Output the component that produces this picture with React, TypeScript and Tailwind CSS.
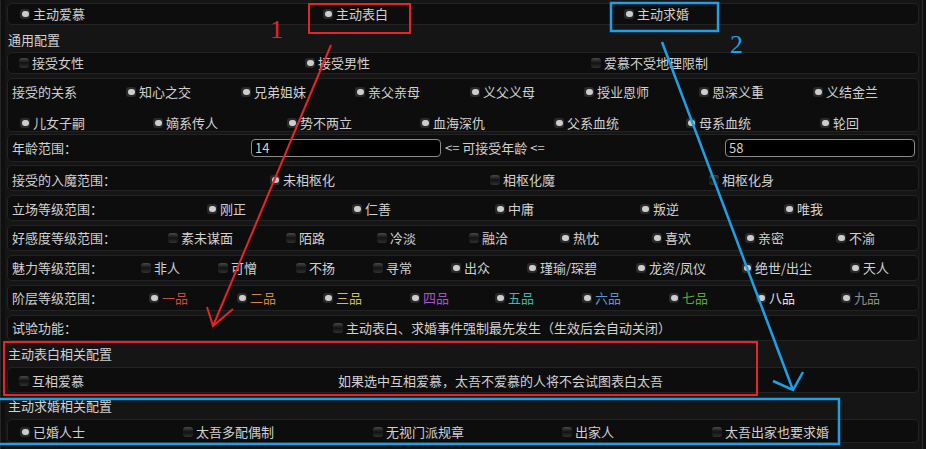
import React from "react";

type Item = { t: string; on?: boolean; c?: string };

const Box = ({ on }: { on?: boolean }) =>
  on ? (
    <span className="flex h-[10px] w-[10px] shrink-0 items-center justify-center rounded-[3px] bg-[#2a2a2a]">
      <span className="h-[6px] w-[7px] rounded-[3px] bg-[#cdcdcd]" />
    </span>
  ) : (
    <span className="h-[10px] w-[10px] shrink-0 rounded-[3px] bg-linear-to-b from-[#4a4a4a] via-[#121212] to-[#313131]" />
  );

const Check = ({ t, on, c }: Item) => (
  <div className="flex items-center gap-[3px] whitespace-nowrap">
    <Box on={on} />
    <span className={c ?? "text-[#d0d0d0]"}>{t}</span>
  </div>
);

const Panel = ({ className, children }: { className: string; children: React.ReactNode }) => (
  <div className={"rounded-[5px] border border-[#232323] bg-[#0d0d0d] " + className}>{children}</div>
);

const Label = ({ t }: { t: string }) => <span className="whitespace-nowrap text-[#d0d0d0]">{t}</span>;

const rel1: Item[] = [
  { t: "知心之交", on: true },
  { t: "兄弟姐妹", on: true },
  { t: "亲父亲母", on: true },
  { t: "义父义母", on: true },
  { t: "授业恩师", on: true },
  { t: "恩深义重", on: true },
  { t: "义结金兰", on: true },
];
const rel2: Item[] = [
  { t: "儿女子嗣", on: true },
  { t: "嫡系传人", on: true },
  { t: "势不两立", on: true },
  { t: "血海深仇", on: true },
  { t: "父系血统", on: true },
  { t: "母系血统", on: true },
  { t: "轮回", on: true },
];
const stance: Item[] = ["刚正", "仁善", "中庸", "叛逆", "唯我"].map((t) => ({ t, on: true }));
const favor: Item[] = [
  { t: "素未谋面" },
  { t: "陌路" },
  { t: "冷淡" },
  { t: "融洽" },
  { t: "热忱", on: true },
  { t: "喜欢", on: true },
  { t: "亲密", on: true },
  { t: "不渝", on: true },
];
const charm: Item[] = [
  { t: "非人" },
  { t: "可憎" },
  { t: "不扬" },
  { t: "寻常" },
  { t: "出众", on: true },
  { t: "瑾瑜/琛碧", on: true },
  { t: "龙资/凤仪", on: true },
  { t: "绝世/出尘", on: true },
  { t: "天人", on: true },
];
const ranks: Item[] = [
  { t: "一品", on: true, c: "text-[#cc4a3e]" },
  { t: "二品", on: true, c: "text-[#d8863c]" },
  { t: "三品", on: true, c: "text-[#d6bb5c]" },
  { t: "四品", on: true, c: "text-[#a852d2]" },
  { t: "五品", on: true, c: "text-[#46b4b2]" },
  { t: "六品", on: true, c: "text-[#5898d8]" },
  { t: "七品", on: true, c: "text-[#58aa3c]" },
  { t: "八品", on: true, c: "text-[#e2e2e2]" },
  { t: "九品", on: true, c: "text-[#8e8e8e]" },
];
const marry: Item[] = [
  { t: "已婚人士", on: true },
  { t: "太吾多配偶制" },
  { t: "无视门派规章" },
  { t: "出家人" },
  { t: "太吾出家也要求婚" },
];

export default function App() {
  return (
    <div className="relative flex h-[449px] w-[926px] overflow-hidden bg-[#151515] font-['Noto_Sans_CJK_SC',sans-serif] text-[13px] leading-[18px] text-[#d0d0d0]">
      <div className="w-[5px] shrink-0 border-l border-[#262626] bg-[#0f0f0f]" />
      <div className="flex flex-1 flex-col pl-[2px] pr-[3px]">
        <Panel className="mt-[3px] grid h-[22px] grid-cols-[303px_301px_1fr] items-center pl-[12px]">
          <Check t="主动爱慕" on />
          <Check t="主动表白" on />
          <Check t="主动求婚" on />
        </Panel>
        <div className="flex h-[27px] items-center pl-[1px] pt-[2px]">通用配置</div>
        <Panel className="grid h-[22px] grid-cols-[286px_286px_1fr] items-center pl-[11px]">
          <Check t="接受女性" />
          <Check t="接受男性" on />
          <Check t="爱慕不受地理限制" />
        </Panel>
        <Panel className="mt-[4px] flex h-[54px] flex-col">
          <div className="grid h-[26px] grid-cols-[114px_115px_114px_115px_114px_115px_114px_1fr] items-center pl-[4px]">
            <Label t="接受的关系" />
            {rel1.map((i) => (
              <Check key={i.t} {...i} />
            ))}
          </div>
          <div className="grid h-[26px] grid-cols-[133px_134px_133px_134px_132px_134px_1fr] items-center pl-[12px] pt-[9px]">
            {rel2.map((i) => (
              <Check key={i.t} {...i} />
            ))}
          </div>
        </Panel>
        <Panel className="mt-[2px] flex h-[28px] items-center pl-[4px]">
          <div className="w-[239px] shrink-0">
            <Label t="年龄范围：" />
          </div>
          <div className="flex h-[18px] w-[190px] shrink-0 items-center rounded-[4px] border border-[#8a8a8a] bg-black pl-[3px]">14</div>
          <div className="w-[284px] shrink-0 pl-[4px]">{"<= 可接受年龄 <="}</div>
          <div className="flex h-[18px] w-[190px] shrink-0 items-center rounded-[4px] border border-[#8a8a8a] bg-black pl-[3px]">58</div>
        </Panel>
        <Panel className="mt-[3px] grid h-[26px] grid-cols-[258px_220px_219px_1fr] items-center pl-[4px] pt-[3px]">
          <Label t="接受的入魔范围：" />
          <Check t="未相枢化" on />
          <Check t="相枢化魔" />
          <Check t="相枢化身" />
        </Panel>
        <Panel className="mt-[4px] grid h-[26px] grid-cols-[195px_145px_143px_145px_144px_1fr] items-center pl-[4px] pt-[1px]">
          <Label t="立场等级范围：" />
          {stance.map((i) => (
            <Check key={i.t} {...i} />
          ))}
        </Panel>
        <Panel className="mt-[4px] grid h-[26px] grid-cols-[156px_118px_91px_92px_91px_92px_93px_91px_1fr] items-center pl-[4px]">
          <Label t="好感度等级范围：" />
          {favor.map((i) => (
            <Check key={i.t} {...i} />
          ))}
        </Panel>
        <Panel className="mt-[4px] grid h-[26px] grid-cols-[129px_77px_78px_77px_78px_76px_109px_106px_108px_1fr] items-center pl-[4px]">
          <Label t="魅力等级范围：" />
          {charm.map((i) => (
            <Check key={i.t} {...i} />
          ))}
        </Panel>
        <Panel className="mt-[4px] grid h-[26px] grid-cols-[137px_88px_86px_87px_85px_87px_87px_87px_85px_1fr] items-center pl-[4px]">
          <Label t="阶层等级范围：" />
          {ranks.map((i) => (
            <Check key={i.t} {...i} />
          ))}
        </Panel>
        <Panel className="mt-[4px] grid h-[26px] grid-cols-[321px_1fr] items-center pl-[4px]">
          <Label t="试验功能：" />
          <Check t="主动表白、求婚事件强制最先发生（生效后会自动关闭）" />
        </Panel>
        <div className="flex h-[26px] items-center pl-[1px]">主动表白相关配置</div>
        <Panel className="grid h-[26px] grid-cols-[319px_1fr] items-center pl-[11px] pt-[1px]">
          <Check t="互相爱慕" />
          <span>如果选中互相爱慕，太吾不爱慕的人将不会试图表白太吾</span>
        </Panel>
        <div className="flex h-[26px] items-center pl-[1px]">主动求婚相关配置</div>
        <Panel className="grid h-[24px] grid-cols-[163px_190px_189px_150px_1fr] items-center pl-[12px] pt-[2px]">
          {marry.map((i) => (
            <Check key={i.t} {...i} />
          ))}
        </Panel>
      </div>
      <div className="w-[4px] shrink-0 border-l border-[#2c2c2c] bg-[#101010]" />

      {/* annotation overlay */}
      <svg className="pointer-events-none absolute left-0 top-0" width="926" height="449" viewBox="0 0 926 449" fill="none">
        <g stroke="#e8232b" strokeWidth="2">
          <rect x="309" y="4" width="101" height="29" />
          <line x1="331" y1="45" x2="213" y2="326" />
          <polyline points="207,307 213,326 233,309" />
          <rect x="4" y="342" width="753" height="53" />
        </g>
        <text x="270" y="38" fill="#e8232b" fontSize="26" fontFamily="'Liberation Serif', serif">1</text>
        <g stroke="#1ea0e6" strokeWidth="2.5">
          <rect x="611" y="3" width="107" height="28" />
          <line x1="662" y1="42" x2="793" y2="390" />
          <polyline points="773,381 793,390 803,372" />
          <rect x="-3" y="399" width="842" height="45" />
        </g>
        <text x="730" y="53" fill="#1ea0e6" fontSize="26" fontFamily="'Liberation Serif', serif">2</text>
      </svg>
    </div>
  );
}
